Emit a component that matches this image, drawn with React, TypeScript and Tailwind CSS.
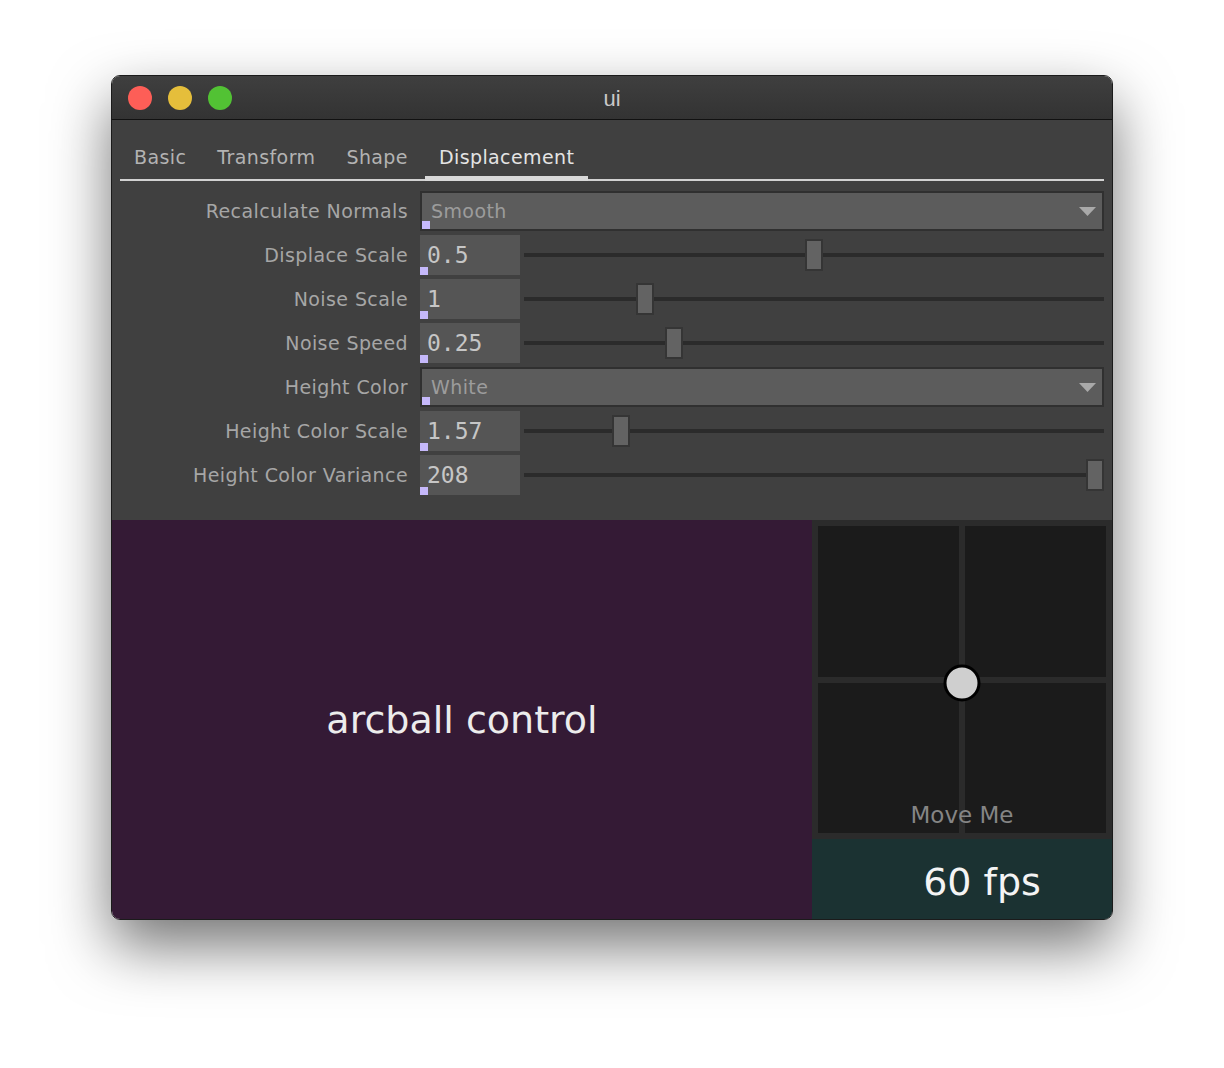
import { useState } from "react";

interface SliderRow {
    kind: "slider";
    label: string;
    value: string;
    frac: number;
}

interface SelectRow {
    kind: "select";
    label: string;
    value: string;
}

type Row = SliderRow | SelectRow;

const rows: Row[] = [
    { kind: "select", label: "Recalculate Normals", value: "Smooth" },
    { kind: "slider", label: "Displace Scale", value: "0.5", frac: 0.5 },
    { kind: "slider", label: "Noise Scale", value: "1", frac: 0.2 },
    { kind: "slider", label: "Noise Speed", value: "0.25", frac: 0.25 },
    { kind: "select", label: "Height Color", value: "White" },
    { kind: "slider", label: "Height Color Scale", value: "1.57", frac: 0.157 },
    { kind: "slider", label: "Height Color Variance", value: "208", frac: 1 },
];

const tabs = ["Basic", "Transform", "Shape", "Displacement"];

const sans = "font-['DejaVu_Sans',sans-serif]";
const mono = "font-['DejaVu_Sans_Mono',monospace]";

function Marker() {
    return <span className="absolute bottom-0 left-0 w-[8px] h-[8px] bg-[#c5b8fa]" />;
}

function SelectBox({ value }: { value: string }) {
    return (
        <div className="relative flex-1 h-[40px] flex items-center border-2 border-[#303030] bg-[#5c5c5c]">
            <span className={`pl-[9px] text-[19px] tracking-[0.4px] text-[#9c9c9c] ${sans}`}>{value}</span>
            <svg className="absolute right-[6px] top-[14px]" width="17" height="10" viewBox="0 0 17 10">
                <polygon points="0,0 17,0 8.5,9" fill="#a9a9a9" />
            </svg>
            <Marker />
        </div>
    );
}

function Slider({ value, frac }: { value: string; frac: number }) {
    return (
        <div className="flex-1 flex items-center h-[40px]">
            <div className="relative w-[100px] h-[40px] bg-[#555555] flex items-center">
                <span className={`pl-[7px] text-[23px] text-[#c6c6c6] ${mono}`}>{value}</span>
                <Marker />
            </div>
            <div className="relative flex-1 ml-[4px] h-full flex items-center">
                <div className="w-full h-[4px] bg-[#2b2b2b]" />
                <div
                    className="absolute top-[4px] w-[18px] h-[32px] bg-[#636363] border-2 border-[#353535]"
                    style={{ left: `calc(${frac} * (100% - 18px))` }}
                />
            </div>
        </div>
    );
}

export default function App() {
    const [active, setActive] = useState("Displacement");

    return (
        <div className="min-h-screen bg-white pt-[75px] pl-[111px]">
            <div className="w-[1002px] rounded-[9px] border border-[#1b1b1b] overflow-hidden shadow-[0_26px_60px_rgba(0,0,0,0.55)]">
                {/* title bar */}
                <div className="relative h-[44px] flex items-center px-[16px] gap-[16px] bg-gradient-to-b from-[#3f3f3f] to-[#333333] border-b border-[#111111]">
                    <span className="w-[24px] h-[24px] rounded-full bg-[#fd5e57]" />
                    <span className="w-[24px] h-[24px] rounded-full bg-[#e5be3b]" />
                    <span className="w-[24px] h-[24px] rounded-full bg-[#52c234]" />
                    <span className="absolute inset-0 pt-[2px] flex items-center justify-center text-[22px] text-[#c9c9c9] font-['Liberation_Sans',sans-serif]">ui</span>
                </div>

                {/* parameters panel */}
                <div className="h-[400px] bg-[#404040] pl-[8px] pr-[8px]">
                    <div className="flex items-end h-[61px] gap-[3px] border-b-2 border-[#d2d2d2]">
                        {tabs.map((t) => (
                            <button
                                key={t}
                                onClick={() => setActive(t)}
                                className={`relative px-[14px] pb-[10px] leading-[24px] text-[19px] tracking-[0.4px] ${sans} ${t === active ? "text-[#e4e4e4]" : "text-[#b3b3b3]"}`}
                            >
                                {t}
                                {t === active && <span className="absolute left-0 right-0 -bottom-[2px] h-[5px] bg-[#d8d8d8]" />}
                            </button>
                        ))}
                    </div>

                    <div className="mt-[10px] flex flex-col gap-[4px]">
                        {rows.map((r) => (
                            <div key={r.label} className="flex items-center">
                                <div className={`w-[289px] pr-[1px] text-right text-[19px] tracking-[0.4px] text-[#a6a6a6] ${sans}`}>{r.label}</div>
                                <div className="ml-[11px] flex-1 flex">
                                    {r.kind === "select" ? <SelectBox value={r.value} /> : <Slider value={r.value} frac={r.frac} />}
                                </div>
                            </div>
                        ))}
                    </div>
                </div>

                {/* bottom area */}
                <div className="flex h-[399px]">
                    <div className="w-[700px] bg-[#341a35] flex items-center justify-center pt-[2px]">
                        <span className={`text-[38px] text-[#ececec] ${sans}`}>arcball control</span>
                    </div>
                    <div className="w-[300px] bg-[#2b2b2b] flex flex-col">
                        <div className="relative m-[6px] h-[307px] grid grid-cols-2 grid-rows-2 gap-[6px]">
                            <div className="bg-[#1b1b1b]" />
                            <div className="bg-[#1b1b1b]" />
                            <div className="bg-[#1b1b1b]" />
                            <div className="bg-[#1b1b1b]" />
                            <span className="absolute left-1/2 top-[calc(50%+3px)] -translate-x-1/2 -translate-y-1/2 w-[37px] h-[37px] rounded-full bg-[#cfcfcf] border-[3px] border-black" />
                            <span className={`absolute left-0 right-0 bottom-[5px] text-center text-[23px] leading-[26px] text-[#858585] ${sans}`}>Move Me</span>
                        </div>
                        <div className="flex-1 bg-[#1b3232] flex items-center justify-center pl-[40px] pt-[6px]">
                            <span className={`text-[38px] text-[#f4f4f4] ${sans}`}>60 fps</span>
                        </div>
                    </div>
                </div>
            </div>
        </div>
    );
}
